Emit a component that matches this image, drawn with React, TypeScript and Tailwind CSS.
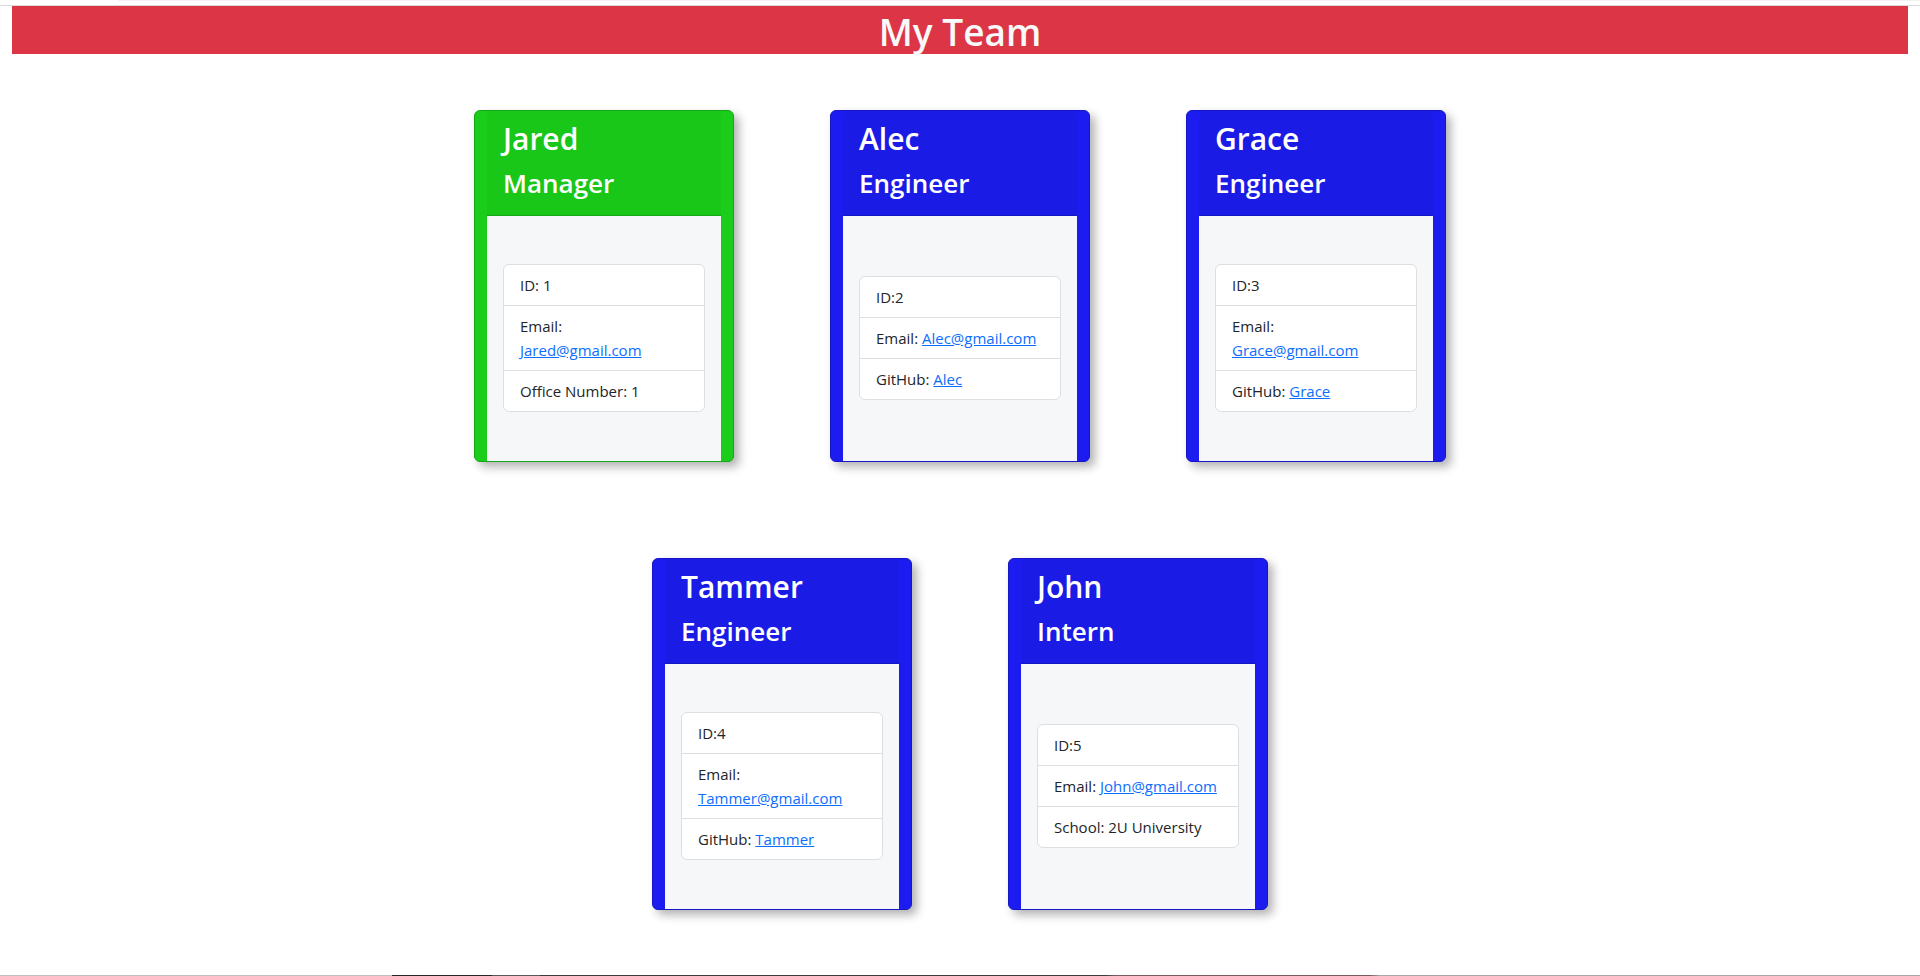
import React from "react";

type Detail = { label: string; value: string; href?: string; ownLine?: boolean };
type Member = { name: string; role: string; tone: "green" | "blue"; details: Detail[] };

const members: Member[] = [
  {
    name: "Jared",
    role: "Manager",
    tone: "green",
    details: [
      { label: "ID: ", value: "1" },
      { label: "Email: ", value: "Jared@gmail.com", href: "mailto:Jared@gmail.com", ownLine: true },
      { label: "Office Number: ", value: "1" },
    ],
  },
  {
    name: "Alec",
    role: "Engineer",
    tone: "blue",
    details: [
      { label: "ID:", value: "2" },
      { label: "Email: ", value: "Alec@gmail.com", href: "mailto:Alec@gmail.com" },
      { label: "GitHub: ", value: "Alec", href: "https://github.com/Alec" },
    ],
  },
  {
    name: "Grace",
    role: "Engineer",
    tone: "blue",
    details: [
      { label: "ID:", value: "3" },
      { label: "Email: ", value: "Grace@gmail.com", href: "mailto:Grace@gmail.com", ownLine: true },
      { label: "GitHub: ", value: "Grace", href: "https://github.com/Grace" },
    ],
  },
  {
    name: "Tammer",
    role: "Engineer",
    tone: "blue",
    details: [
      { label: "ID:", value: "4" },
      { label: "Email: ", value: "Tammer@gmail.com", href: "mailto:Tammer@gmail.com", ownLine: true },
      { label: "GitHub: ", value: "Tammer", href: "https://github.com/Tammer" },
    ],
  },
  {
    name: "John",
    role: "Intern",
    tone: "blue",
    details: [
      { label: "ID:", value: "5" },
      { label: "Email: ", value: "John@gmail.com", href: "mailto:John@gmail.com" },
      { label: "School: ", value: "2U University" },
    ],
  },
];

const tones = {
  green: "bg-[#1acd1a] border-[#17a617]",
  blue: "bg-[#1c1cf0] border-[#1616c4]",
};

const headerTones = {
  green: "bg-[#19c719] border-[#17a617]",
  blue: "bg-[#1b1be6] border-[#1616c4]",
};

function MemberCard({ member }: { member: Member }) {
  return (
    <article
      className={`m-12 flex h-88 w-65 flex-col rounded-md border px-3 shadow-[5px_5px_10px_rgba(0,0,0,0.3)] ${tones[member.tone]}`}
    >
      <header className={`rounded-t-md border-b px-4 pt-[9px] pb-[7px] text-white ${headerTones[member.tone]}`}>
        <h2 className="mb-2 text-[30px] leading-[38px] font-semibold">{member.name}</h2>
        <h3 className="mb-2 text-[26px] leading-[34px] font-semibold">{member.role}</h3>
      </header>
      <div className="flex grow flex-col justify-center bg-[#f5f7f9] px-4 pb-0.5">
        <ul className="divide-y divide-[#dfdfdf] rounded-md border border-[#dfdfdf] bg-white text-[15px] leading-6 text-[#212529]">
          {member.details.map((d) => (
            <li key={d.label} className="px-4 py-2">
              {d.label}
              {d.ownLine && <br />}
              {d.href ? (
                <a href={d.href} className="text-[#0d6efd] underline">
                  {d.value}
                </a>
              ) : (
                d.value
              )}
            </li>
          ))}
        </ul>
      </div>
    </article>
  );
}

export default function App() {
  return (
    <div className="flex min-h-screen flex-col bg-white font-['Open_Sans','Noto_Sans',sans-serif]">
      <div className="ml-[118px] h-px bg-[#f1f1f1]" />
      <div className="mt-1 h-px bg-[#dadada]" />
      <h1 className="mx-3 bg-[#dc3545] pt-1 text-center text-[37px] leading-11 font-semibold text-[#f8f9fa]">
        My Team
      </h1>
      <main className="mx-auto mt-2 flex w-full max-w-[1320px] grow flex-wrap content-start justify-center">
        {members.map((m) => (
          <MemberCard key={m.name} member={m} />
        ))}
      </main>
      <div className="h-px bg-[linear-gradient(to_right,#bdbdbd_0_392px,#2a2424_392px_492px,#5a5a5a_492px_540px,#3c3c3c_540px_1105px,#7a5a5c_1115px_1370px,#a8a8ac_1380px)]" />
    </div>
  );
}
